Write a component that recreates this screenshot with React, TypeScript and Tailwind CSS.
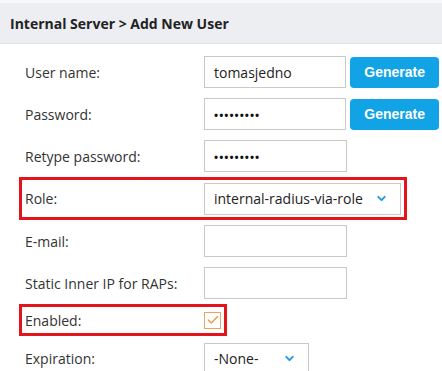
import { ChevronDown, Check } from 'lucide-react';

const font = { fontFamily: "'Open Sans', 'Noto Sans', sans-serif" };

function Label({ text }: { text: string }) {
  return <div className="w-[182px] shrink-0 pl-[3px] text-[14px] text-[#333]">{text}</div>;
}

function TextBox({ children }: { children?: React.ReactNode }) {
  return (
    <div className="w-[143px] h-[32px] border border-[#c9c9c9] bg-white flex items-center px-[9px] text-[14px] text-[#222]">
      {children}
    </div>
  );
}

function Dots() {
  return <span className="text-[11px] tracking-[1px] leading-none font-bold text-[#111]">•••••••••</span>;
}

function GenerateButton() {
  return (
    <button
      className="ml-[4px] w-[89px] h-[31px] rounded-[4px] bg-[#12a3e6] text-white text-[14px] font-bold"
      style={{ fontFamily: "'Liberation Sans', Arial, sans-serif" }}
    >
      Generate
    </button>
  );
}

function Select({ value, width }: { value: string; width: string }) {
  return (
    <div className={`${width} h-[32px] border border-[#c9c9c9] bg-white flex items-center justify-between pl-[9px] pr-[12px] text-[14px] text-[#222]`}>
      <span>{value}</span>
      <ChevronDown className="w-[13px] h-[13px] text-[#1a9de2]" strokeWidth={3.5} />
    </div>
  );
}

export default function App() {
  return (
    <div className="w-[442px] h-[371px] bg-white overflow-hidden" style={font}>
      <div className="h-[3px] bg-[#f6f7f9]" />
      <div className="h-[41px] bg-[#eceef2] border-b border-[#e2e5e9] flex items-center pl-[10px]">
        <h1 className="text-[14px] font-bold text-[#222]">Internal Server &gt; Add New User</h1>
      </div>

      <div className="pt-[7px] pl-[19px]">
        <div className="h-[42px] flex items-center border-x-[3px] border-transparent">
          <Label text="User name:" />
          <TextBox>tomasjedno</TextBox>
          <GenerateButton />
        </div>
        <div className="h-[42px] flex items-center border-x-[3px] border-transparent">
          <Label text="Password:" />
          <TextBox><Dots /></TextBox>
          <GenerateButton />
        </div>
        <div className="h-[42px] flex items-center border-x-[3px] border-transparent">
          <Label text="Retype password:" />
          <TextBox><Dots /></TextBox>
        </div>
        <div className="h-[43px] w-[388px] flex items-center border-[3px] border-[#e3141b]">
          <Label text="Role:" />
          <Select value="internal-radius-via-role" width="w-[197px]" />
        </div>
        <div className="h-[42px] flex items-center border-x-[3px] border-transparent">
          <Label text="E-mail:" />
          <TextBox />
        </div>
        <div className="h-[42px] flex items-center border-x-[3px] border-transparent">
          <Label text="Static Inner IP for RAPs:" />
          <TextBox />
        </div>
        <div className="h-[32px] w-[208px] flex items-center border-[3px] border-[#e3141b]">
          <Label text="Enabled:" />
          <div className="w-[17px] h-[17px] border border-[#f0a259] flex items-center justify-center">
            <Check className="w-[14px] h-[14px] text-[#ee9a4a]" strokeWidth={2.5} />
          </div>
        </div>
        <div className="mt-[7px] h-[31px] flex items-center border-x-[3px] border-transparent">
          <Label text="Expiration:" />
          <Select value="-None-" width="w-[105px]" />
        </div>
      </div>
    </div>
  );
}
